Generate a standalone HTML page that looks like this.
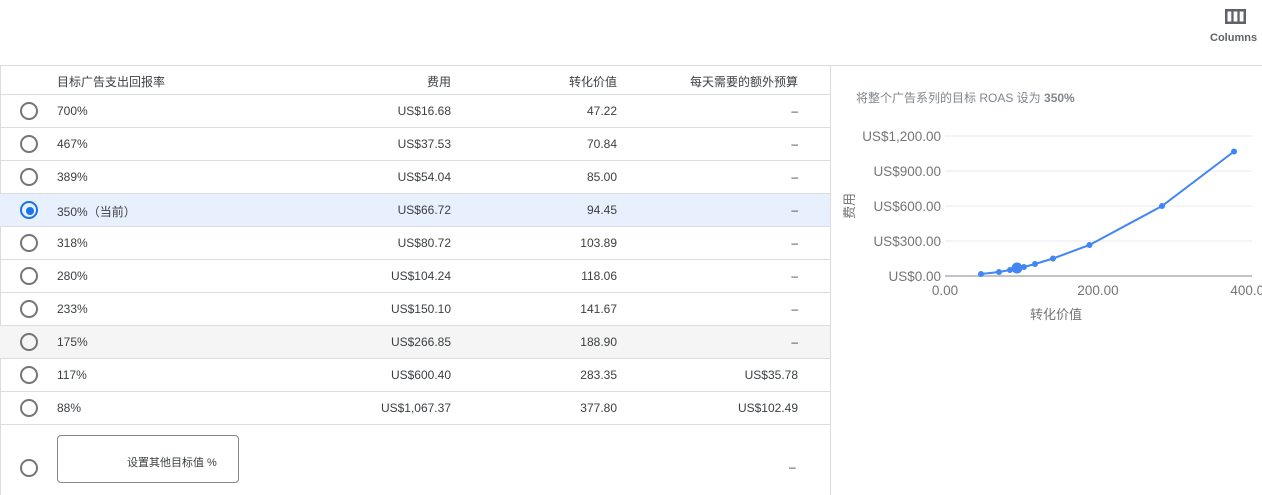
<!DOCTYPE html><html><head><meta charset="utf-8"><style>
body{margin:0;width:1262px;height:495px;overflow:hidden;background:#fff;font-family:"Liberation Sans","Noto Sans CJK SC",sans-serif;font-size:12px;color:#3c4043;position:relative}
.a{position:absolute}
.row{position:absolute;left:0;width:830px;height:32px;border-bottom:1px solid #dadce0}
.row span{position:absolute;top:9px;white-space:nowrap}
.r{width:14px;height:14px;border:2px solid #757575;border-radius:50%;left:20px;top:7px;position:absolute;box-sizing:content-box}
.c1{left:57px}.c2{right:379px}.c3{right:213px}.c4{right:32px}
</style></head><body>
<div class="a" style="left:1225px;top:9px;width:21px;height:15px">
<svg width="21" height="15" viewBox="0 0 21 15"><rect x="0" y="0" width="21" height="15" fill="#5f6368"/><rect x="2.5" y="2.5" width="3.8" height="10" fill="#fff"/><rect x="8.6" y="2.5" width="3.8" height="10" fill="#fff"/><rect x="14.7" y="2.5" width="3.8" height="10" fill="#fff"/></svg></div>
<div class="a" style="left:1210px;top:32px;font-size:11px;color:#5f6368;font-weight:bold">Columns</div>
<div class="a" style="left:0;top:65px;width:1262px;border-top:1px solid #dadce0"></div>
<div class="a" style="left:0;top:65px;height:430px;border-left:1px solid #dadce0"></div>
<div class="a" style="left:830px;top:65px;height:430px;border-left:1px solid #dadce0"></div>
<div class="row" style="top:66px;height:28px"><span class="c1" style="top:7px">目标广告支出回报率</span><span class="c2" style="top:7px">费用</span><span class="c3" style="top:7px">转化价值</span><span class="c4" style="top:7px">每天需要的额外预算</span></div>
<div class="row" style="top:95px"><i class="r"></i><span class="c1">700%</span><span class="c2">US$16.68</span><span class="c3">47.22</span><span class="c4">–</span></div>
<div class="row" style="top:128px"><i class="r"></i><span class="c1">467%</span><span class="c2">US$37.53</span><span class="c3">70.84</span><span class="c4">–</span></div>
<div class="row" style="top:161px"><i class="r"></i><span class="c1">389%</span><span class="c2">US$54.04</span><span class="c3">85.00</span><span class="c4">–</span></div>
<div class="row" style="top:194px;background:#e8f0fe"><i class="r" style="border-color:#1a73e8"></i><i class="a" style="left:25px;top:12px;width:8px;height:8px;border-radius:50%;background:#1a73e8;margin:1px"></i><span class="c1">350%（当前）</span><span class="c2">US$66.72</span><span class="c3">94.45</span><span class="c4">–</span></div>
<div class="row" style="top:227px"><i class="r"></i><span class="c1">318%</span><span class="c2">US$80.72</span><span class="c3">103.89</span><span class="c4">–</span></div>
<div class="row" style="top:260px"><i class="r"></i><span class="c1">280%</span><span class="c2">US$104.24</span><span class="c3">118.06</span><span class="c4">–</span></div>
<div class="row" style="top:293px"><i class="r"></i><span class="c1">233%</span><span class="c2">US$150.10</span><span class="c3">141.67</span><span class="c4">–</span></div>
<div class="row" style="top:326px;background:#f5f5f5"><i class="r"></i><span class="c1">175%</span><span class="c2">US$266.85</span><span class="c3">188.90</span><span class="c4">–</span></div>
<div class="row" style="top:359px"><i class="r"></i><span class="c1">117%</span><span class="c2">US$600.40</span><span class="c3">283.35</span><span class="c4">US$35.78</span></div>
<div class="row" style="top:392px"><i class="r"></i><span class="c1">88%</span><span class="c2">US$1,067.37</span><span class="c3">377.80</span><span class="c4">US$102.49</span></div>
<i class="r" style="top:459px"></i>
<div class="a" style="left:57px;top:435px;width:182px;height:48px;border:1px solid #80868b;border-radius:4px;box-sizing:border-box"><span class="a" style="left:69px;top:18px;font-size:11px">设置其他目标值 %</span></div>
<div class="a" style="left:789px;top:460px">–</div>
<div class="a" style="left:856px;top:89px;color:#80868b">将整个广告系列的目标 ROAS 设为 <b>350%</b></div>
<svg class="a" style="left:835px;top:120px" width="427" height="210" viewBox="835 120 427 210">
<g stroke="#e8eaed" stroke-width="1"><line x1="945" y1="136" x2="1252" y2="136"/><line x1="945" y1="171" x2="1252" y2="171"/><line x1="945" y1="206" x2="1252" y2="206"/><line x1="945" y1="241" x2="1252" y2="241"/></g>
<line x1="945" y1="276" x2="1252" y2="276" stroke="#9aa0a6" stroke-width="1.2"/>
<g font-family="Liberation Sans" font-size="13.5" fill="#757575" text-anchor="end"><text x="941" y="141">US$1,200.00</text><text x="941" y="176">US$900.00</text><text x="941" y="211">US$600.00</text><text x="941" y="246">US$300.00</text><text x="941" y="281">US$0.00</text></g>
<g font-family="Liberation Sans" font-size="13.5" fill="#757575" text-anchor="middle"><text x="945" y="295">0.00</text><text x="1098" y="295">200.00</text><text x="1251" y="295">400.00</text></g>
<text x="1056" y="319" font-size="13" fill="#757575" text-anchor="middle" font-family="Noto Sans CJK SC">转化价值</text>
<text transform="translate(854,206) rotate(-90)" font-size="13" fill="#757575" text-anchor="middle" font-family="Noto Sans CJK SC">费用</text>
<polyline fill="none" stroke="#4285f4" stroke-width="2" points="981,274 999,272 1010,270 1017,268 1024,267 1035,264 1053,258.5 1089.5,245 1162,206 1234,151.5"/>
<g fill="#4285f4"><circle cx="981" cy="274" r="3"/><circle cx="999" cy="272" r="3"/><circle cx="1010" cy="270" r="3"/><circle cx="1017" cy="268" r="5.5"/><circle cx="1024" cy="267" r="3"/><circle cx="1035" cy="264" r="3"/><circle cx="1053" cy="258.5" r="3"/><circle cx="1089.5" cy="245" r="3"/><circle cx="1162" cy="206" r="3"/><circle cx="1234" cy="151.5" r="3"/></g>
</svg>
</body></html>
